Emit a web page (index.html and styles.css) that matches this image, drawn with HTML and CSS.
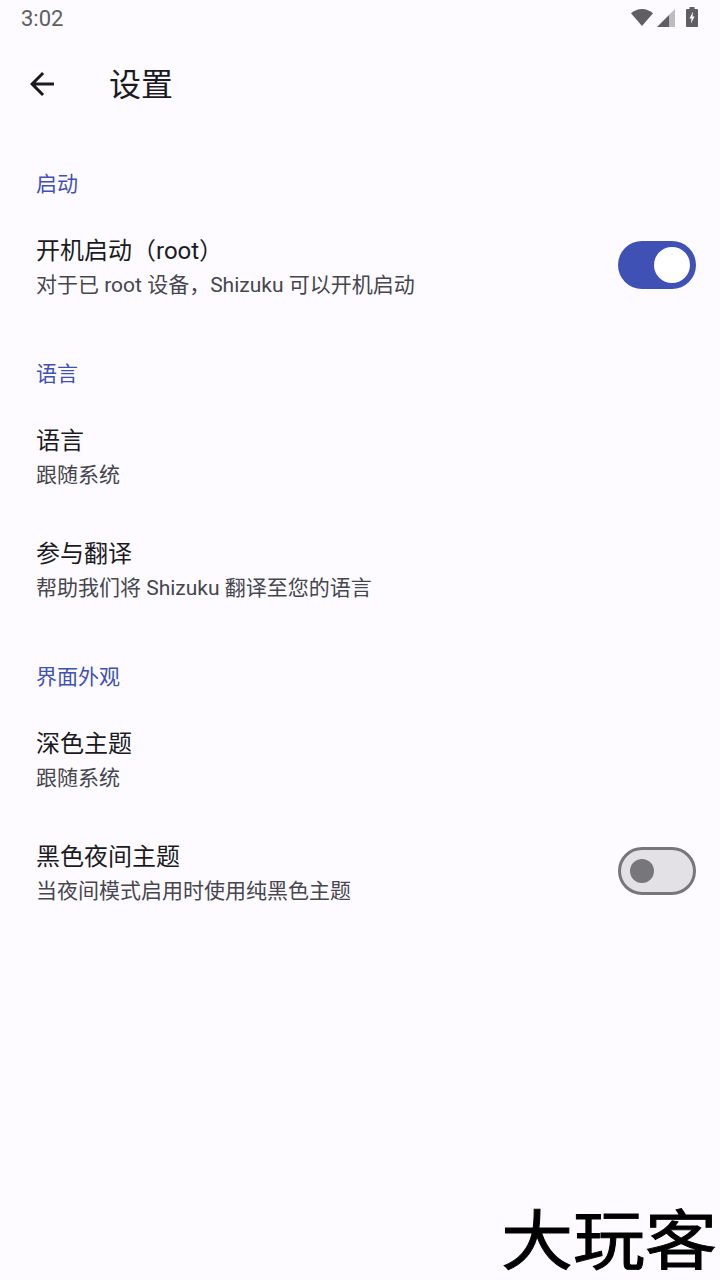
FILE: index.html

```html
<!DOCTYPE html>
<html>
  <head>
    <title>设置</title>
    <link rel="stylesheet" href="styles.css">
  </head>
  <body>
    <div class="status-bar">
      <span class="clock">3:02</span>
      <div class="status-icons">
        <svg class="wifi" width="22" height="17" viewBox="0 0 24 18" preserveAspectRatio="none"><path d="M0 4.500C3.200 1.800 7.500 0 12 0s8.800 1.800 12 4.500L12 18z" fill="#5f5e63"/></svg>
        <svg class="signal" width="18" height="18" viewBox="0 0 18 18"><path d="M0 18L12.500 5.500V18z" fill="#5f5e63"/><path d="M12.500 5.500L18 0V18H12.500z" fill="#bdbcc0"/></svg>
        <svg class="battery" width="12" height="20" viewBox="0 0 12 20"><path d="M3.500 0h5v2H11a1 1 0 0 1 1 1v16a1 1 0 0 1-1 1H1a1 1 0 0 1-1-1V3a1 1 0 0 1 1-1h2.500z" fill="#5f5e63"/><path d="M7 4.500L3.500 11.500H5.500L5 16.500L8.500 9.500H6.500z" fill="#fdfbff"/></svg>
      </div>
    </div>

    <div class="toolbar">
      <svg class="back" width="36" height="36" viewBox="0 0 24 24"><path d="M20 11H7.830l5.590-5.590L12 4l-8 8 8 8 1.410-1.410L7.830 13H20z" fill="#1b1b1f"/></svg>
      <h1>设置</h1>
    </div>

    <div class="section first">
      <h2>启动</h2>
      <div class="row">
        <div class="row-text">
          <div class="row-title">开机启动（root）</div>
          <div class="row-summary">对于已 root 设备，Shizuku 可以开机启动</div>
        </div>
        <div class="switch on"><div class="thumb"></div></div>
      </div>
    </div>

    <div class="section">
      <h2>语言</h2>
      <div class="row">
        <div class="row-text">
          <div class="row-title">语言</div>
          <div class="row-summary">跟随系统</div>
        </div>
      </div>
      <div class="row">
        <div class="row-text">
          <div class="row-title">参与翻译</div>
          <div class="row-summary">帮助我们将 Shizuku 翻译至您的语言</div>
        </div>
      </div>
    </div>

    <div class="section">
      <h2>界面外观</h2>
      <div class="row">
        <div class="row-text">
          <div class="row-title">深色主题</div>
          <div class="row-summary">跟随系统</div>
        </div>
      </div>
      <div class="row">
        <div class="row-text">
          <div class="row-title">黑色夜间主题</div>
          <div class="row-summary">当夜间模式启用时使用纯黑色主题</div>
        </div>
        <div class="switch off"><div class="thumb"></div></div>
      </div>
    </div>

    <div class="watermark">大玩客</div>
  </body>
</html>
```

FILE: styles.css

```css
html, body {
  height: 100%;
}

body {
  margin: 0;
  position: relative;
  background-color: #fdfbff;
  color: #1b1b1f;
  font-family: Roboto, "Noto Sans CJK SC", sans-serif;
}

.status-bar {
  height: 42px;
  padding: 0 22px 0 21px;
  display: flex;
  justify-content: space-between;
  align-items: flex-start;
  box-sizing: border-box;
}

.clock {
  font-size: 22px;
  line-height: 38px;
  color: #5f5e63;
}

.status-icons {
  display: flex;
  align-items: flex-start;
  padding-top: 9px;
}

.signal {
  margin-left: 4px;
}

.battery {
  margin-left: 11px;
  margin-top: -2px;
}

.toolbar {
  height: 84px;
  display: flex;
  align-items: center;
  padding-left: 24px;
}

.toolbar h1 {
  margin: 0 0 4px 49px;
  font-size: 32px;
  font-weight: 400;
}

.section {
  padding-top: 24px;
}

.section.first {
  padding-top: 32px;
}

.section h2 {
  margin: 0;
  height: 53px;
  line-height: 53px;
  padding-left: 36px;
  font-size: 21px;
  font-weight: 400;
  color: #3f51b5;
}

.row {
  height: 113px;
  padding: 0 24px 0 36px;
  display: flex;
  align-items: center;
  justify-content: space-between;
  box-sizing: border-box;
}

.row-title {
  padding-top: 1px;
  font-size: 24px;
  line-height: 35px;
}

.row-summary {
  font-size: 21px;
  line-height: 33px;
  color: #46464f;
}

.switch {
  width: 78px;
  height: 48px;
  margin-bottom: 6px;
  border-radius: 24px;
  box-sizing: border-box;
  display: flex;
  align-items: center;
}

.switch.on {
  background-color: #3f51b5;
  justify-content: flex-end;
  padding-right: 6px;
}

.switch.on .thumb {
  width: 36px;
  height: 36px;
  border-radius: 50%;
  background-color: #ffffff;
}

.switch.off {
  background-color: #e3e1e6;
  border: 3px solid #77767b;
  padding-left: 9px;
}

.switch.off .thumb {
  width: 24px;
  height: 24px;
  border-radius: 50%;
  background-color: #77767b;
}

.watermark {
  position: absolute;
  left: 501px;
  bottom: 6px;
  font-family: "Noto Sans CJK SC", sans-serif;
  font-size: 72px;
  line-height: 76px;
  color: #000000;
  white-space: nowrap;
  -webkit-text-stroke: 1px #000000;
  transform: scaleY(0.9);
}
```
